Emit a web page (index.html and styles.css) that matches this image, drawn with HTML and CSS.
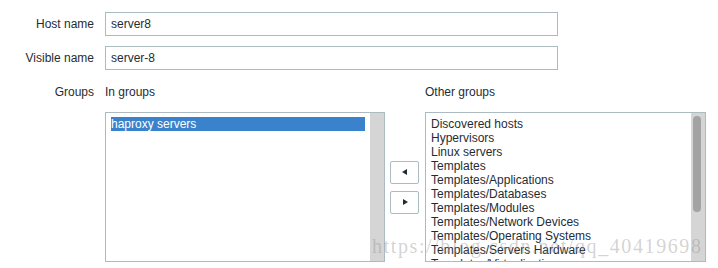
FILE: index.html
```html
<!DOCTYPE html>
<html>
<head>
<meta charset="utf-8">
<link rel="stylesheet" href="styles.css">
</head>
<body>
<div class="form">
  <label class="label">Host name</label>
  <div class="field"><input class="text-input" type="text" value="server8"></div>

  <label class="label">Visible name</label>
  <div class="field"><input class="text-input" type="text" value="server-8"></div>

  <label class="label label-top">Groups</label>
  <div class="field groups">
    <div class="group-head">In groups</div>
    <div></div>
    <div class="group-head">Other groups</div>

    <div class="listbox">
      <div class="items">
        <div class="item selected">haproxy servers</div>
      </div>
      <div class="scrollbar"></div>
    </div>

    <div class="movers">
      <button class="mover" type="button"><span class="tri tri-left"></span></button>
      <button class="mover" type="button"><span class="tri tri-right"></span></button>
    </div>

    <div class="listbox">
      <div class="items">
        <div class="item">Discovered hosts</div>
        <div class="item">Hypervisors</div>
        <div class="item">Linux servers</div>
        <div class="item">Templates</div>
        <div class="item">Templates/Applications</div>
        <div class="item">Templates/Databases</div>
        <div class="item">Templates/Modules</div>
        <div class="item">Templates/Network Devices</div>
        <div class="item">Templates/Operating Systems</div>
        <div class="item">Templates/Servers Hardware</div>
        <div class="item">Templates/Virtualization</div>
      </div>
      <div class="scrollbar"><div class="thumb"></div></div>
    </div>
  </div>
</div>
<div class="watermark">https://blog.csdn.net/qq_40419698</div>
</body>
</html>
```

FILE: styles.css
```css
html, body {
  margin: 0;
  padding: 0;
  background: #ffffff;
}

body {
  font-family: "Liberation Sans", Arial, sans-serif;
  font-size: 12px;
  color: #1f2c33;
  width: 718px;
  height: 268px;
  overflow: hidden;
  position: relative;
}

.form {
  display: grid;
  grid-template-columns: 94px auto;
  column-gap: 11px;
  row-gap: 10px;
  padding-top: 12px;
}

.label {
  text-align: right;
  line-height: 24px;
  white-space: nowrap;
}

.label-top {
  line-height: 14px;
  padding-top: 5px;
}

.text-input {
  box-sizing: border-box;
  display: block;
  width: 453px;
  height: 24px;
  margin: 0;
  padding: 0 5px;
  border: 1px solid #acbbc2;
  border-radius: 0;
  font-family: "Liberation Sans", Arial, sans-serif;
  font-size: 12px;
  color: #1f2c33;
  background: #ffffff;
  outline: none;
}

.groups {
  display: grid;
  grid-template-columns: 280px 40px 281px;
  grid-template-rows: 14px 150px;
  row-gap: 13px;
  padding-top: 5px;
}

.group-head {
  line-height: 14px;
  white-space: nowrap;
}

.group-head:last-of-type {
  padding-left: 1px;
}

.listbox {
  box-sizing: border-box;
  border: 1px solid #acbbc2;
  display: flex;
  height: 150px;
  background: #ffffff;
}

.items {
  flex: 1;
  padding: 4px 5px;
  overflow: hidden;
}

.item {
  line-height: 14px;
  height: 14px;
  white-space: nowrap;
  color: #1f2c33;
}

.item.selected {
  background: #3a82cc;
  color: #ffffff;
}

.scrollbar {
  width: 14px;
  background: #d5d5d5;
  display: flex;
  flex-direction: column;
  align-items: flex-start;
  padding-top: 3px;
  box-sizing: border-box;
}

.thumb {
  width: 8px;
  height: 96px;
  margin-left: 2px;
  border-radius: 4px;
  background: #a3a3a3;
}

.movers {
  display: flex;
  flex-direction: column;
  justify-content: center;
  align-items: flex-start;
  gap: 7px;
  padding-left: 5px;
}

.mover {
  box-sizing: border-box;
  width: 29px;
  height: 23px;
  margin: 0;
  padding: 0;
  border: 1px solid #acbbc2;
  border-radius: 2px;
  background: #ffffff;
  display: flex;
  align-items: center;
  justify-content: center;
}

.tri {
  display: block;
  width: 0;
  height: 0;
  border-top: 3.5px solid transparent;
  border-bottom: 3.5px solid transparent;
}

.tri-left {
  border-right: 5px solid #1f2c33;
  margin-right: 1px;
}

.tri-right {
  border-left: 5px solid #1f2c33;
  margin-left: 1px;
}

.watermark {
  position: absolute;
  left: 372px;
  top: 236px;
  font-family: "Liberation Serif", "Times New Roman", serif;
  font-size: 20px;
  line-height: 20px;
  letter-spacing: 1.6px;
  color: rgba(150, 150, 150, 0.42);
  white-space: nowrap;
  pointer-events: none;
}
```
